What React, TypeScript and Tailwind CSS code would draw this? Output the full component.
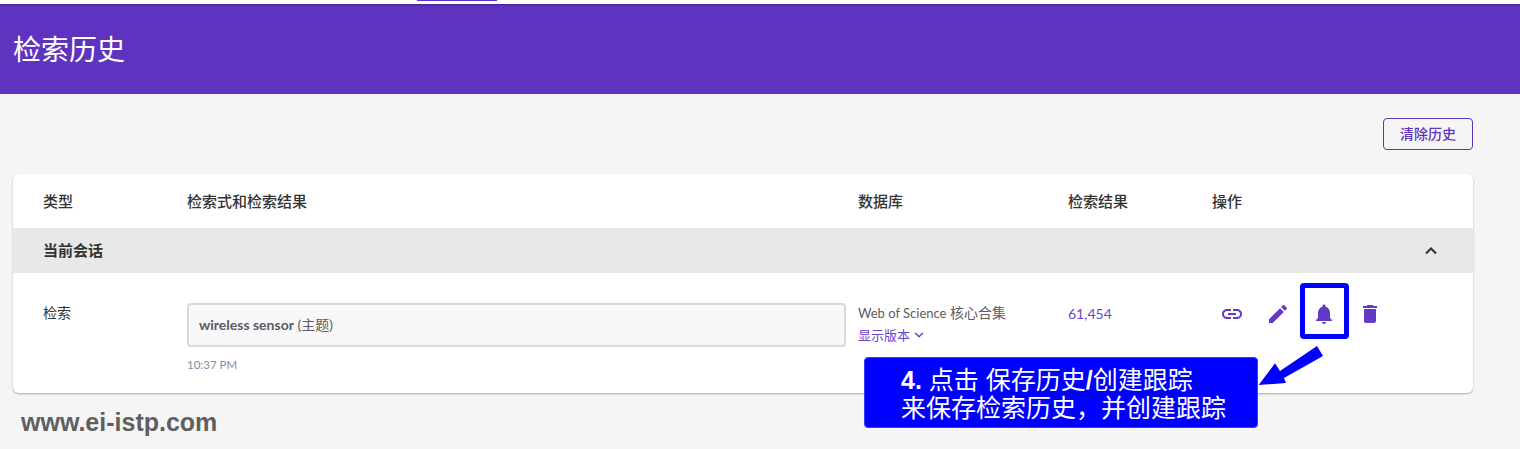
import { ChevronDown } from "lucide-react";

const cjk = "font-['Noto_Sans','Noto_Sans_CJK_SC',sans-serif]";
const latin = "font-['Lato','Noto_Sans_CJK_SC',sans-serif]";

function LinkIcon() {
  return (
    <svg viewBox="0 0 24 24" className="h-6 w-6 fill-[#6438c8]">
      <path d="M3.9 12c0-1.71 1.39-3.1 3.1-3.1h4V7H7c-2.76 0-5 2.24-5 5s2.24 5 5 5h4v-1.9H7c-1.71 0-3.1-1.39-3.1-3.1zM8 13h8v-2H8v2zm9-6h-4v1.9h4c1.71 0 3.1 1.39 3.1 3.1s-1.39 3.1-3.1 3.1h-4V17h4c2.76 0 5-2.24 5-5s-2.24-5-5-5z" />
    </svg>
  );
}

function PencilIcon() {
  return (
    <svg viewBox="0 0 24 24" className="h-6 w-6 fill-[#6438c8]">
      <path d="M3 17.25V21h3.75L17.81 9.94l-3.75-3.75L3 17.25zM20.71 7.04a1 1 0 0 0 0-1.41l-2.34-2.34a1 1 0 0 0-1.41 0l-1.83 1.83 3.75 3.75 1.83-1.83z" />
    </svg>
  );
}

function BellIcon() {
  return (
    <svg viewBox="0 0 24 24" className="h-6 w-6 fill-[#6438c8]">
      <path d="M12 22c1.1 0 2-.9 2-2h-4c0 1.1.9 2 2 2zm6-6v-5c0-3.07-1.63-5.64-4.5-6.32V4c0-.83-.67-1.5-1.5-1.5s-1.5.67-1.5 1.5v.68C7.64 5.36 6 7.92 6 11v5l-2 2v1h16v-1l-2-2z" />
    </svg>
  );
}

function TrashIcon() {
  return (
    <svg viewBox="0 0 24 24" className="h-6 w-6 fill-[#6438c8]">
      <path d="M6 19c0 1.1.9 2 2 2h8c1.1 0 2-.9 2-2V7H6v12zM19 4h-3.5l-1-1h-5l-1 1H5v2h14V4z" />
    </svg>
  );
}

export default function App() {
  return (
    <div className={`relative h-[449px] overflow-hidden bg-[#f5f5f5] ${cjk}`}>
      {/* top nav remnant */}
      <div className="h-1 bg-white">
        <div className="ml-[417px] h-px w-20 bg-[#5e33bf]" />
      </div>

      <div className="flex h-[90px] items-center bg-[#5e33bf] px-[13px] shadow-[inset_0_2px_2px_-1px_rgba(0,0,0,0.3)]">
        <h1 className="text-[28px] leading-none text-white">检索历史</h1>
      </div>

      <div className="flex justify-end pr-[47px] pt-6">
        <button className="h-8 w-[90px] rounded border border-[#5e33bf] text-sm font-medium text-[#5e33bf]">
          清除历史
        </button>
      </div>

      <div className="mx-[13px] mr-[47px] mt-6 h-[219px] rounded-md bg-white shadow-[0_1px_2px_rgba(0,0,0,0.3)]">
        <div className="grid h-[54px] grid-cols-[174px_671px_210px_144px_1fr] items-center text-[15px] font-medium text-[#333]">
          <div className="pl-[30px]">类型</div>
          <div>检索式和检索结果</div>
          <div>数据库</div>
          <div>检索结果</div>
          <div>操作</div>
        </div>

        <div className="flex h-[45px] items-center justify-between bg-[#e8e8e8] pl-[30px] pr-[32px] text-[15px] font-semibold text-[#333]">
          <span>当前会话</span>
          <svg viewBox="0 0 24 24" className="h-5 w-5 fill-none stroke-[#333] stroke-[2.5]">
            <path d="M6 15l6-6 6 6" />
          </svg>
        </div>

        <div className={`grid h-[120px] grid-cols-[174px_671px_210px_144px_1fr] text-sm text-[#5c5c5c] ${latin}`}>
          <div className="pl-[30px] pt-[30px] text-[#333]">检索</div>
          <div className="pt-[30px]">
            <div className="flex h-11 w-[659px] items-center rounded border-2 border-[#d9d9d9] bg-[#f8f8fb] px-[10px]">
              <span>
                <span className="font-bold">wireless sensor</span> (主题)
              </span>
            </div>
            <div className="mt-[10px] text-[11.5px] text-[#8a8aa6]">10:37 PM</div>
          </div>
          <div className="pt-[30px]">
            <div>
              <span className="text-[13px]">Web of Science</span> 核心合集
            </div>
            <div className="mt-[3px] flex items-center gap-0.5 text-[13px] text-[#6a45c8]">
              显示版本
              <ChevronDown className="h-3.5 w-3.5" strokeWidth={2.5} />
            </div>
          </div>
          <div className="pt-[31px] text-sm text-[#6a45c8]">61,454</div>
          <div className="flex items-start gap-[22px] pl-2 pt-[29px]">
            <LinkIcon />
            <PencilIcon />
            <BellIcon />
            <TrashIcon />
          </div>
        </div>
      </div>

      {/* annotation layer */}
      <div className="absolute left-[1300px] top-[283px] h-[56px] w-[49px] rounded-[4px] border-[5px] border-[#0000ff]" />

      <svg className="absolute left-[1250px] top-[340px]" width="80" height="50" viewBox="0 0 80 50">
        <path d="M8.7 45 L25 23.3 L30 31 L67 6 L73 16 L34 38 L36 43 Z" fill="#0000ff" />
      </svg>

      <div className="absolute left-[864px] top-[357px] h-[71px] w-[394px] rounded-[4px] border border-[#3a3aff] bg-[#0000ff] pl-[36px] pt-2 font-['Liberation_Sans','Noto_Sans_CJK_SC',serif] text-[25px] leading-7 text-white">
        <div>
          <b>4.</b> 点击 保存历史<b>/</b>创建跟踪
        </div>
        <div>来保存检索历史，并创建跟踪</div>
      </div>

      <div className="absolute left-[21px] top-[406px] font-['Liberation_Sans',sans-serif] text-[25px] font-bold leading-[32px] text-[#5f5f5f]">
        www.ei-istp.com
      </div>
    </div>
  );
}
